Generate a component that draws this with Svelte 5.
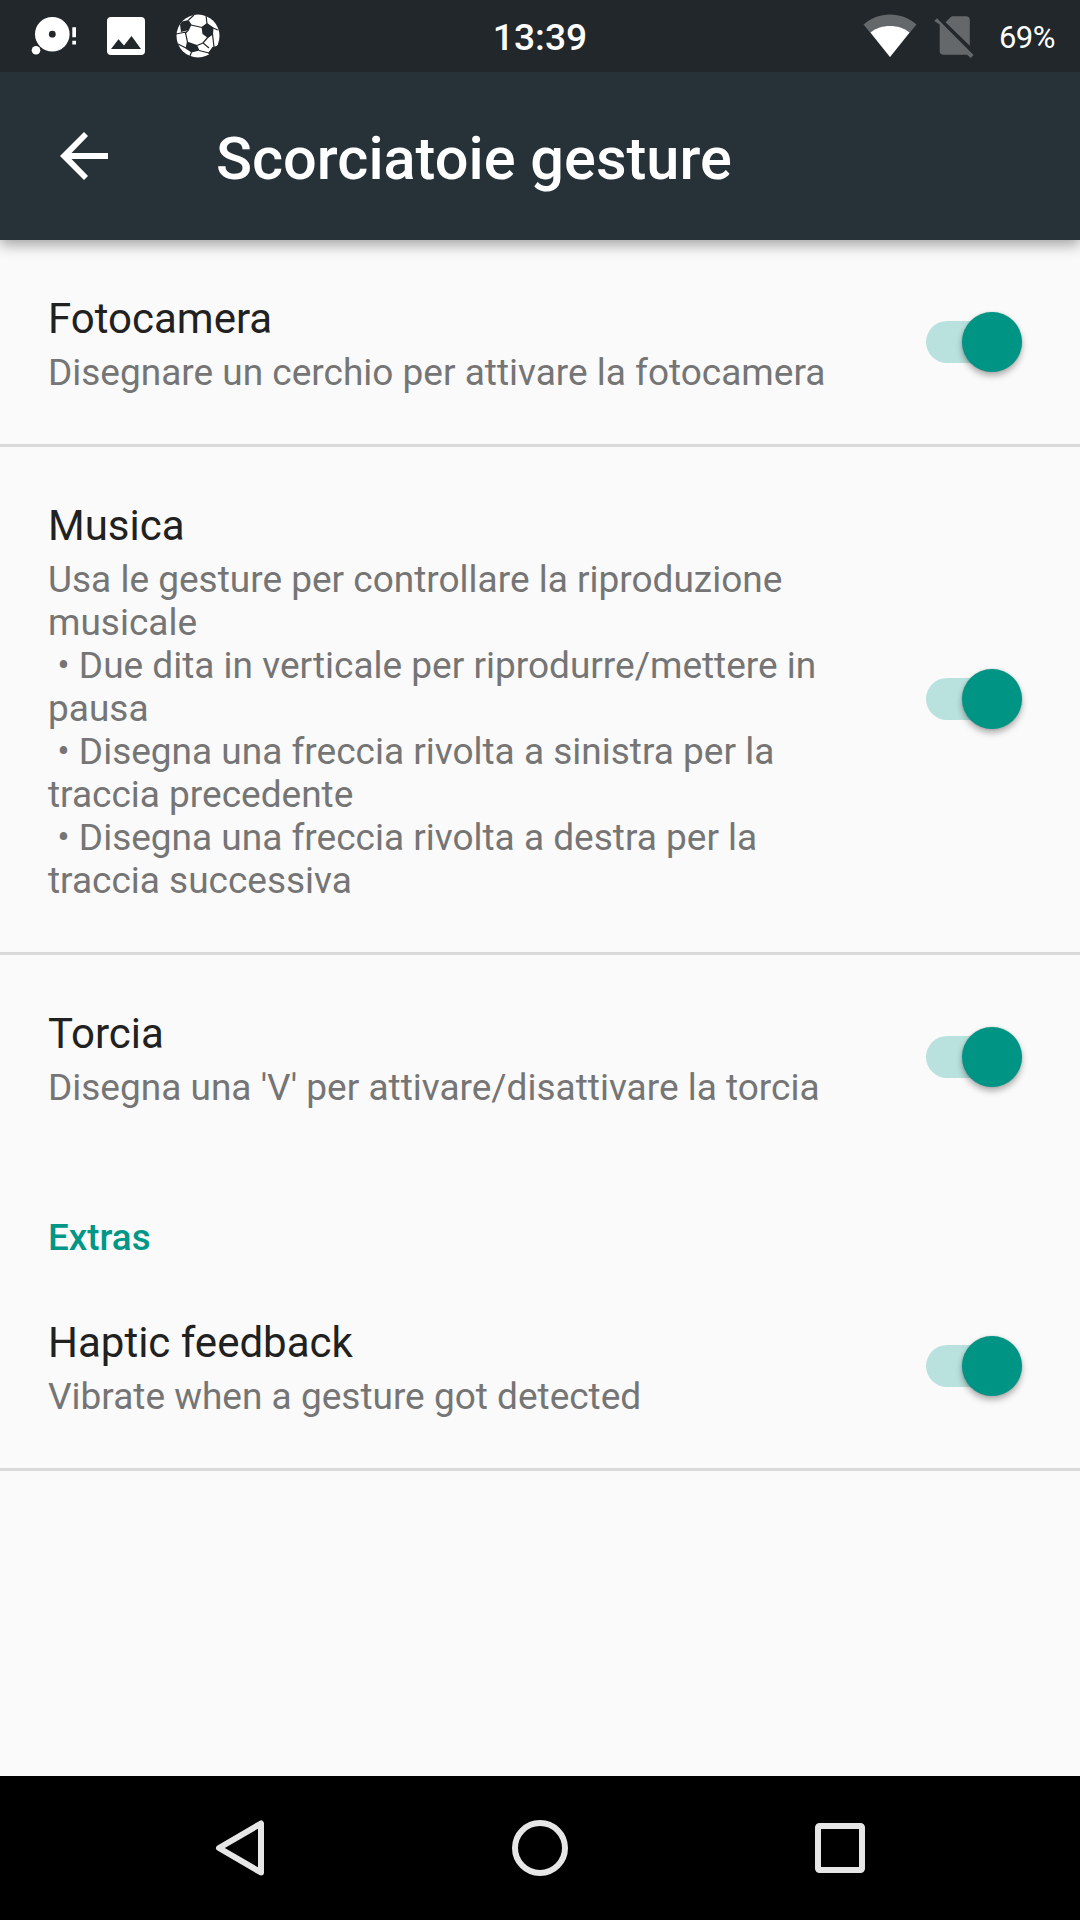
<script lang="ts">
    interface Preference {
        title: string;
        summary: string;
        enabled: boolean;
    }

    let gestures: Preference[] = [
        {
            title: 'Fotocamera',
            summary: 'Disegnare un cerchio per attivare la fotocamera',
            enabled: true
        },
        {
            title: 'Musica',
            summary: 'Usa le gesture per controllare la riproduzione musicale\n'
                + ' • Due dita in verticale per riprodurre/mettere in pausa\n'
                + ' • Disegna una freccia rivolta a sinistra per la traccia precedente\n'
                + ' • Disegna una freccia rivolta a destra per la traccia successiva',
            enabled: true
        },
        {
            title: 'Torcia',
            summary: "Disegna una 'V' per attivare/disattivare la torcia",
            enabled: true
        }
    ];

    let extras: Preference[] = [
        {
            title: 'Haptic feedback',
            summary: 'Vibrate when a gesture got detected',
            enabled: true
        }
    ];

    let sections = [
        { caption: '', items: gestures },
        { caption: 'Extras', items: extras }
    ];
</script>

<div class="screen">
    <div class="status-bar">
        <div class="notifications">
            <svg width="46" height="40" viewBox="0 0 46 40">
                <circle cx="21.300" cy="18.200" r="17.300" fill="#fff" />
                <circle cx="21.300" cy="18.200" r="3.400" fill="#22272b" />
                <circle cx="5" cy="34.200" r="4.300" fill="#fff" />
                <path fill="#fff" d="M41.300 11.300h3.700v10h-3.700zM41.300 24.800h3.700v3.600h-3.700z" />
            </svg>
            <svg width="38" height="38" viewBox="0 0 38 38">
                <rect width="38" height="38" rx="4" fill="#fff" />
                <path fill="#22272b" d="M4 32 11.500 22.300 17 28.500 24.500 19 34 32z" />
            </svg>
            <svg class="ball" width="44" height="44" viewBox="0 0 44 44">
                <circle cx="22" cy="22" r="21.500" fill="#fff" />
                <path
                    fill="#22272b"
                    d="M4 10.500 6 7.500 12.500 6 15.500 10.500 13 16 5 18zM25.500 13 31 9 37.500 13.500 37 20.500 32 24 26.500 20zM11 27.500 21 31 23.500 36.500 15.500 38.500 9.500 34.500zM36.500 33 43 31.500 39 38 34 41.500 32 39z"
                />
                <path
                    fill="none"
                    stroke="#22272b"
                    stroke-width="1.200"
                    d="M12.500 6 18 1M15 11 26 13.500M12.500 16 9.500 19 11.500 28M10 18 0 20M31 10 30 1M37 14 42 16M32 23 27 29 33 34M27 29 21 31.500M36.500 20 38 33M23 36.500 33 39M15.500 38 14 42M10 34 2 30"
                />
            </svg>
        </div>
        <div class="clock">13:39</div>
        <div class="indicators">
            <svg width="54" height="44" viewBox="0 0 54 44">
                <path fill="#64686b" d="M.5 10.500C8 4 17 .500 27 .500S46 4 53.500 10.500L27 43z" />
                <path fill="#fff" d="M7.500 18.500C13 14 20 12 27 12s14 2 19.500 6.500L27 43z" />
            </svg>
            <svg class="sim" width="40" height="41" viewBox="0 0 40 41">
                <path fill="#64686b" d="M11.500 6.200 16.500 1.200Q17.500 .300 19 .300H32q3.800 0 3.800 3.800V29.700zM5.700 8.500V35q0 3.800 3.800 3.800H33L36.800 42 39.500 38.900 3 2.300.300 5z" />
            </svg>
            <div class="battery">69%</div>
        </div>
    </div>

    <header class="toolbar">
        <svg width="48" height="48" viewBox="0 0 48 48">
            <path fill="#fff" d="M48 21H11.500L28 4 24 0 0 24l24 24 4-4-16.500-17H48z" />
        </svg>
        <h1>Scorciatoie gesture</h1>
    </header>

    <main>
        {#each sections as section}
            <section>
                {#if section.caption}
                    <h2>{section.caption}</h2>
                {/if}
                {#each section.items as item}
                    <div class="preference">
                        <div class="text">
                            <div class="title">{item.title}</div>
                            <div class="summary">{item.summary}</div>
                        </div>
                        <button
                            class="switch"
                            class:on={item.enabled}
                            role="switch"
                            aria-checked={item.enabled}
                            aria-label={item.title}
                            on:click={() => (item.enabled = !item.enabled)}
                        >
                            <span class="thumb"></span>
                        </button>
                    </div>
                {/each}
            </section>
        {/each}
    </main>

    <nav>
        <svg width="48" height="56" viewBox="0 0 48 56">
            <path fill="none" stroke="#e6e6e6" stroke-width="6" stroke-linejoin="round" d="M45 3.500V52.500L3 28z" />
        </svg>
        <svg width="56" height="56" viewBox="0 0 56 56">
            <circle cx="28" cy="28" r="25" fill="none" stroke="#e6e6e6" stroke-width="6" />
        </svg>
        <svg width="50" height="50" viewBox="0 0 50 50">
            <rect x="3" y="3" width="44" height="44" rx="1.500" fill="none" stroke="#e6e6e6" stroke-width="6" />
        </svg>
    </nav>
</div>

<style>
    :global(body) {
        background-color: #fafafa;
    }

    .screen {
        display: flex;
        flex-direction: column;
        height: 1920px;
        background-color: #fafafa;
        font-family: Roboto, "Liberation Sans", sans-serif;
    }

    svg {
        display: block;
        flex: none;
        overflow: visible;
    }

    .status-bar {
        position: relative;
        z-index: 1;
        display: grid;
        grid-template-columns: 1fr auto 1fr;
        align-items: center;
        height: 72px;
        padding: 0 25px;
        background-color: #22272b;
        color: #ffffff;
    }

    .notifications,
    .indicators {
        display: flex;
        align-items: center;
    }

    .notifications {
        gap: 30px;
        padding-left: 6px;
    }

    .ball {
        margin-left: 1px;
    }

    .indicators {
        justify-content: flex-end;
    }

    .clock {
        margin-top: 2px;
        font-size: 37.2px;
        font-weight: 500;
    }

    .sim {
        margin: 0 25px 0 17px;
    }

    .battery {
        margin-top: 2px;
        font-size: 31px;
        letter-spacing: -0.5px;
    }

    .toolbar {
        display: flex;
        align-items: center;
        gap: 108px;
        height: 168px;
        padding-left: 60px;
        background-color: #263238;
        box-shadow: 0 5px 13px rgba(0, 0, 0, 0.35);
        color: #ffffff;
    }

    h1 {
        margin: 5px 0 0;
        font-size: 59.5px;
        font-weight: 500;
    }

    main {
        flex: 1;
    }

    h2 {
        display: flex;
        align-items: flex-end;
        height: 105px;
        margin: 0;
        padding: 0 48px 5px;
        box-sizing: border-box;
        color: #009688;
        font-size: 36.75px;
        font-weight: 500;
    }

    .preference {
        display: flex;
        align-items: center;
        justify-content: space-between;
        padding: 54px 58.5px 50px 48px;
        border-bottom: 3px solid #dadada;
    }

    section:first-child .preference:last-child {
        border-bottom: none;
    }

    .text {
        width: 790px;
    }

    .title {
        color: #212121;
        font-size: 42px;
        line-height: 50px;
    }

    .summary {
        margin-top: 7px;
        color: #757575;
        font-size: 37px;
        line-height: 43px;
        white-space: pre-wrap;
    }

    .switch {
        display: flex;
        align-items: center;
        width: 96px;
        height: 42px;
        margin-bottom: 5px;
        padding: 0;
        border: none;
        border-radius: 21px;
        background-color: #c4c4c4;
    }

    .switch.on {
        justify-content: flex-end;
        background-color: #b9e1dd;
    }

    .thumb {
        flex: none;
        width: 60px;
        height: 60px;
        border-radius: 50%;
        background-color: #f1f1f1;
        box-shadow: 0 4px 6px rgba(0, 0, 0, 0.3), 0 0 2px rgba(0, 0, 0, 0.2);
    }

    .on .thumb {
        background-color: #009485;
    }

    nav {
        display: grid;
        grid-template-columns: repeat(3, 300px);
        align-items: center;
        justify-content: center;
        justify-items: center;
        height: 144px;
        background-color: #000000;
    }
</style>
